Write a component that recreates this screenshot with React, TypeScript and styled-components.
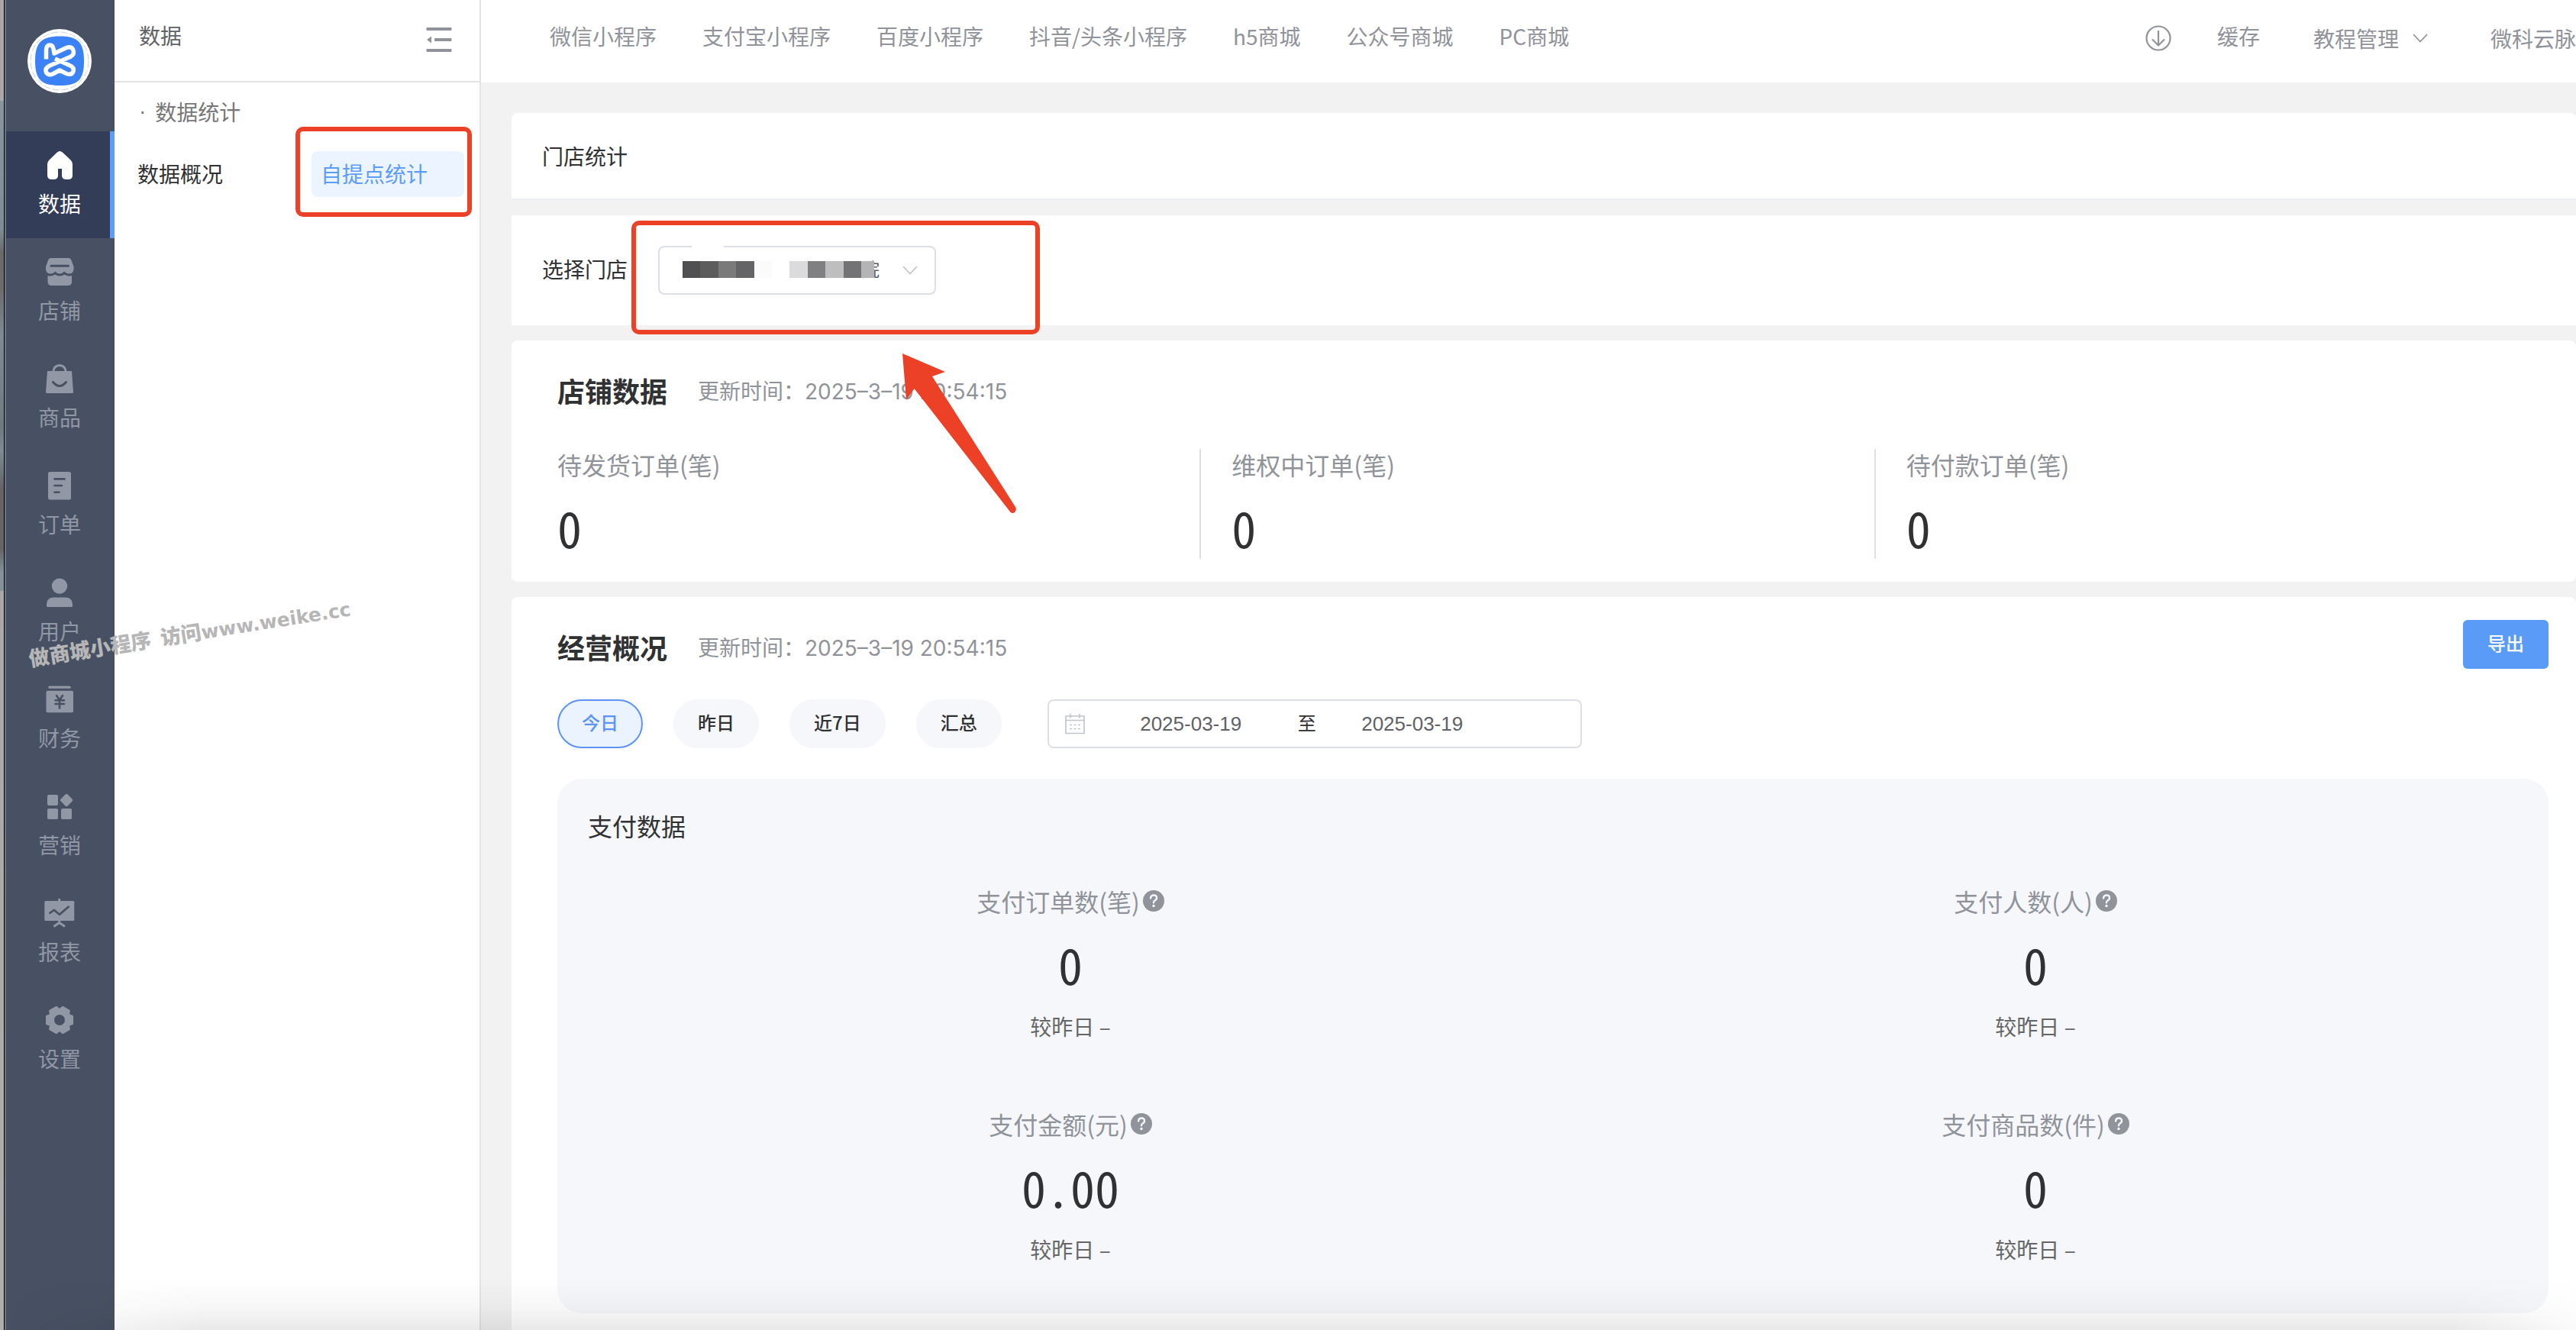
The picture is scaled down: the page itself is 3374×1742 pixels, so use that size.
import React from "react";
import styled, { createGlobalStyle } from "styled-components";

const Global = createGlobalStyle`
  *, *::before, *::after { box-sizing: border-box; }
  body {
    margin: 0;
    background: #f2f2f2;
    color: #303133;
    font-family: "Noto Sans CJK SC", sans-serif;
    font-size: 28px;
    line-height: 40px;
  }
  button, input, select { font: inherit; color: inherit; }
  a { color: inherit; text-decoration: none; }
  h1, h2, h3, p, dl, dd, dt, ul { margin: 0; padding: 0; font-weight: 400; font-size: inherit; }
  ul { list-style: none; }
`;

/* ---------- shell ---------- */

const Shell = styled.div`
  position: relative;
  display: flex;
  min-height: 100vh;
  overflow: hidden;
`;

const WindowEdge = styled.div`
  flex: none;
  width: 8px;
  background: linear-gradient(
    #a9a9a9 0 132px, #87959c 132px, #7f8d96 300px, #6a6a6a 330px, #6c6c6c 380px,
    #7d8b94 440px, #6f7a80 560px, #7d8b94 590px, #646464 640px, #666 720px,
    #83929b 750px, #83929b 774px, #a9a9a9 774px, #adb0ab 100%
  );
  border-right: 2px solid #6b7485;
  box-shadow: inset -1px 0 0 #000;
`;

const Sidebar = styled.nav`
  flex: none;
  width: 142px;
  background: #475163;
`;

const LogoLink = styled.a`
  display: flex;
  justify-content: center;
  height: 172px;
  padding: 38px 2px 0 0;
`;

const SideItem = styled.a<{ $active?: boolean }>`
  display: flex;
  flex-direction: column;
  align-items: center;
  gap: 10px;
  height: 140px;
  padding: 24px 2px 0 0;
  color: ${(p) => (p.$active ? "#fff" : "#9197a5")};
  background: ${(p) => (p.$active ? "#333d57" : "transparent")};
  box-shadow: ${(p) => (p.$active ? "inset -6px 0 0 #5c9dfb" : "none")};
  --cut: ${(p) => (p.$active ? "#333d57" : "#475163")};
`;

const SubMenu = styled.aside`
  flex: none;
  width: 480px;
  background: #fff;
  border-right: 2px solid #e4e4e4;
`;

const SubHead = styled.div`
  display: flex;
  justify-content: space-between;
  height: 108px;
  padding: 0 36px 0 32px;
  border-bottom: 2px solid #e4e4e4;
  color: #606266;
  line-height: 92px;
`;

const FoldButton = styled.button`
  display: block;
  height: 104px;
  padding: 0;
  border: 0;
  background: none;
  svg { display: block; }
`;

const GroupTitle = styled.p`
  display: flex;
  gap: 12px;
  padding: 18px 32px 32px;
  color: #777;
`;

const Dot = styled.span`
  font-family: "Liberation Sans", Arial, sans-serif;
`;

const SubLinks = styled.div`
  display: flex;
  justify-content: space-between;
  padding: 0 20px 0 30px;
`;

const SubLink = styled.a<{ $active?: boolean }>`
  position: relative;
  height: 60px;
  line-height: 58px;
  width: ${(p) => (p.$active ? "200px" : "auto")};
  padding-left: ${(p) => (p.$active ? "12px" : "0")};
  border-radius: 8px;
  color: ${(p) => (p.$active ? "#5c9dfb" : "#303133")};
  background: ${(p) => (p.$active ? "#ecf4ff" : "none")};
`;

const RedFrame = styled.span<{ $inset: string }>`
  position: absolute;
  inset: ${(p) => p.$inset};
  border: 6px solid #ec4126;
  border-radius: 10px;
  pointer-events: none;
`;

/* ---------- top bar ---------- */

const Page = styled.div`
  flex: 1;
  min-width: 0;
  display: flex;
  flex-direction: column;
`;

const TopBar = styled.header`
  display: flex;
  justify-content: space-between;
  height: 108px;
  padding-left: 90px;
  background: #fff;
  color: #909399;
  white-space: nowrap;
`;

const TopNav = styled.nav`
  display: flex;
  gap: 60px;
  line-height: 94px;
`;

const TopTools = styled.div`
  display: flex;
  line-height: 94px;
`;

const ToolButton = styled.button<{ $gap: number; $low?: boolean }>`
  display: flex;
  align-items: center;
  gap: 18px;
  height: ${(p) => (p.$low ? "100px" : "94px")};
  margin: 0 0 0 ${(p) => p.$gap}px;
  padding: 0;
  border: 0;
  background: none;
`;

/* ---------- cards ---------- */

const Main = styled.main`
  flex: 1;
  display: flex;
  flex-direction: column;
  gap: 20px;
  padding: 40px 0 0 40px;
`;

const TitleCard = styled.section`
  padding: 0 40px;
  background: #fff;
  border-bottom: 2px solid #ebeef5;
  border-radius: 8px 8px 0 0;
  line-height: 112px;
`;

const StoreCard = styled.section`
  position: relative;
  display: flex;
  gap: 40px;
  padding: 40px;
  background: #fff;
`;

const StoreLabel = styled.label`
  line-height: 60px;
`;

const SelectBox = styled.div`
  position: relative;
  display: flex;
  width: 364px;
  height: 64px;
`;

const StoreSelect = styled.select`
  appearance: none;
  width: 100%;
  padding: 0 60px 4px 264px;
  border: 2px solid #dcdfe6;
  border-radius: 8px;
  background: #fff;
  color: #606266;
  font-size: 24px;
`;

const SelectArrow = styled.span`
  position: absolute;
  top: 26px;
  right: 24px;
  display: flex;
`;

const Mosaic = styled.span`
  position: absolute;
  top: 20px;
  left: 32px;
  display: grid;
  grid-template-columns: repeat(10, 1fr) 17px;
  width: 251px;
  height: 22px;
`;

const Tile = styled.span<{ $tone: string }>`
  background: ${(p) => p.$tone};
`;

const Smudge = styled.span`
  position: absolute;
  top: 0;
  left: 44px;
  width: 42px;
  height: 6px;
  background: #fff;
`;

const Arrow = styled.svg`
  position: absolute;
  top: 180px;
  left: 508px;
  z-index: 2;
  pointer-events: none;
`;

const DataCard = styled.section<{ $grow?: boolean }>`
  flex: ${(p) => (p.$grow ? "1" : "none")};
  padding: 30px 36px 30px 18px;
  background: #fff;
  border-radius: 8px;
`;

const CardHead = styled.div`
  display: flex;
  gap: 40px;
  height: 68px;
  padding-left: 42px;
  line-height: 70px;
`;

const CardTitle = styled.h2`
  font-size: 36px;
  font-weight: 700;
`;

const Updated = styled.span`
  color: #909399;
`;

const UpdatedTime = styled.time`
  font-family: Inter, "Noto Sans CJK SC", sans-serif;
`;

const ExportButton = styled.button`
  width: 112px;
  height: 64px;
  margin-left: auto;
  padding: 0 0 4px;
  border: 0;
  border-radius: 6px;
  background: #5b9bf8;
  color: #fff;
  font-size: 24px;
  font-weight: 500;
  line-height: 60px;
`;

const Stats = styled.dl`
  display: grid;
  grid-template-columns: repeat(3, 1fr);
  margin-top: 44px;
`;

const Stat = styled.div`
  height: 144px;
  padding-left: 40px;
  border-left: 2px solid #dcdfe6;
  &:first-child { border-color: transparent; }
`;

const StatName = styled.dt`
  color: #909399;
  font-size: 32px;
`;

const Figure = styled.dd`
  margin: 0;
  font-family: "Noto Sans Mono CJK SC", "Noto Sans CJK SC", sans-serif;
  font-size: 64px;
  line-height: 76px;
`;

const StatFigure = styled(Figure)`
  margin-top: 24px;
`;

const Filters = styled.div`
  display: flex;
  gap: 40px;
  padding: 36px 0 40px 42px;
`;

const Pill = styled.button<{ $active?: boolean }>`
  height: 64px;
  padding: 0 30px 4px;
  border: 2px solid ${(p) => (p.$active ? "#5c93f6" : "#f5f7fb")};
  border-radius: 32px;
  background: ${(p) => (p.$active ? "#ebf3fe" : "#f5f7fb")};
  color: ${(p) => (p.$active ? "#5c93f6" : "#303133")};
  font-size: 24px;
  font-weight: 500;
`;

const DateRange = styled.div`
  display: flex;
  align-items: center;
  width: 700px;
  height: 64px;
  margin-left: 20px;
  padding-left: 20px;
  border: 2px solid #dcdfe6;
  border-radius: 8px;
  font-size: 24px;
`;

const DateInput = styled.input`
  width: 252px;
  padding: 0;
  border: 0;
  outline: 0;
  background: none;
  color: #606266;
  font-family: "Liberation Sans", Arial, sans-serif;
  font-size: 26px;
  text-align: center;
`;

const CalendarSlot = styled.span`
  display: flex;
  width: 40px;
`;

const Until = styled.span`
  width: 38px;
  padding-bottom: 4px;
  text-align: right;
`;

const Panel = styled.section`
  margin-left: 42px;
  padding: 36px 40px 64px;
  border-radius: 32px;
  background: #f5f7fb;
`;

const PanelTitle = styled.h3`
  font-size: 32px;
  line-height: 50px;
`;

const Metrics = styled.dl`
  display: grid;
  grid-template-columns: 1fr 1fr;
  gap: 84px 0;
  margin-top: 50px;
  text-align: center;
`;

const MetricName = styled.dt`
  display: flex;
  align-items: center;
  justify-content: center;
  gap: 4px;
  color: #909399;
  font-size: 32px;
  line-height: 48px;
`;

const MetricFigure = styled(Figure)`
  padding: 20px 0 24px;
`;

const Compare = styled.dd`
  margin: 0;
  color: #666;
`;

/* ---------- overlays ---------- */

const Watermark = styled.div`
  position: absolute;
  top: 846px;
  left: 38px;
  transform: rotate(-9deg);
  transform-origin: 0 50%;
  color: #b6b6b6;
  font-size: 27px;
  font-weight: 900;
  line-height: 32px;
  white-space: pre;
  pointer-events: none;
`;

const WatermarkSite = styled.span`
  font-family: "DejaVu Sans", sans-serif;
  font-size: 25px;
  font-weight: 700;
`;

const BottomShade = styled.div`
  position: absolute;
  right: 0;
  bottom: 0;
  left: 8px;
  height: 76px;
  background: linear-gradient(rgba(0, 0, 0, 0), rgba(0, 0, 0, 0.03) 50%, rgba(0, 0, 0, 0.1));
  mask-image: linear-gradient(90deg, transparent, #000 260px calc(100% - 160px), rgba(0, 0, 0, 0.2));
  pointer-events: none;
`;

/* ---------- icons ---------- */

const cut = "var(--cut)";

const Glyph = ({ children }: { children: React.ReactNode }) => (
  <svg width="40" height="40" viewBox="0 0 40 40" fill="currentColor" aria-hidden="true">
    {children}
  </svg>
);

const gearPoints = Array.from({ length: 6 }, (_, i) =>
  [[-30, 13.2], [-16, 17.2], [16, 17.2]].map(([offset, radius]) => {
    const a = ((i * 60 + offset) * Math.PI) / 180;
    return `${20 + radius * Math.cos(a)},${20 + radius * Math.sin(a)}`;
  })
)
  .flat()
  .join(" ");

const icons: Record<string, React.ReactNode> = {
  home: (
    <path d="M16.8 3.6Q20.3 0.6 23.8 3.6L34.5 13.4Q37 15.8 37 19V33.5Q37 39 31 39H29Q23 39 23 34V25H18V34Q18 39 12 39H10Q4 39 4 33.5V19Q4 15.8 6.5 13.4Z" />
  ),
  shop: (
    <>
      <path d="M9 2H31.5Q34.5 2 35.5 5L38.6 13.5Q39.5 22.5 32.5 22.5Q28.5 22.5 26.3 19.5Q23.8 22.5 20.3 22.5Q16.8 22.5 14.3 19.5Q12 22.5 8 22.5Q1 22.5 2 13.5L5 5Q6 2 9 2Z" />
      <path d="M4.5 25Q10 26.5 14 23.5Q20 27.5 26.5 23.5Q30.5 26.5 36 25V33Q36 38 31 38H9.5Q4.5 38 4.5 33Z" />
      <path d="M9 12.3H31.5" stroke={cut} strokeWidth="3" strokeLinecap="round" />
    </>
  ),
  bag: (
    <>
      <path d="M4 10H36L38 37.5Q38 39 36.5 39H3.5Q2 39 2 37.5Z" />
      <path d="M12 11V10A8 7.5 0 0 1 28 10V11" fill="none" stroke="currentColor" strokeWidth="3" />
      <path d="M11.5 24.5Q20 34.5 28.5 24.5" fill="none" stroke={cut} strokeWidth="3" strokeLinecap="round" />
    </>
  ),
  order: (
    <>
      <rect x="5" y="2" width="30" height="36.5" rx="2.5" />
      <path d="M13.5 11.4H26.5M13.5 20H23M13.5 28.7H19.5" stroke={cut} strokeWidth="2.6" strokeLinecap="round" />
    </>
  ),
  user: (
    <>
      <circle cx="20" cy="11.6" r="10.2" />
      <path d="M11.5 26.5H28.5Q37 27 37 36V37.5Q37 39 35.5 39H4.5Q3 39 3 37.5V36Q3 27 11.5 26.5Z" />
    </>
  ),
  finance: (
    <>
      <rect x="5.3" y="2.5" width="29.4" height="3.2" rx="1.5" />
      <rect x="2.5" y="8.8" width="35.5" height="28.5" rx="2" />
      <path d="M16 15L20 21L24 15M20 21V31.5M14.5 21.3H26M14.500 26H26" fill="none" stroke={cut} strokeWidth="2.6" strokeLinecap="round" />
    </>
  ),
  market: (
    <>
      <rect x="4" y="5" width="14" height="14" rx="2" />
      <rect x="4" y="23" width="14" height="14" rx="2" />
      <rect x="22" y="23" width="14" height="14" rx="2" />
      <rect x="22.8" y="5.7" width="12.6" height="12.6" rx="1.8" transform="rotate(45 29.1 12)" />
    </>
  ),
  report: (
    <>
      <rect x="0.3" y="4" width="39" height="26" rx="1.5" />
      <path d="M19.7 1V5M19.7 29V34M12.5 37.5L19.7 32.5L27 37.5" fill="none" stroke="currentColor" strokeWidth="3" />
      <path d="M6.5 20.5L12.7 16L20 21.8L32.5 11" fill="none" stroke={cut} strokeWidth="2.6" />
    </>
  ),
  gear: (
    <>
      <polygon points={gearPoints} stroke="currentColor" strokeWidth="3" strokeLinejoin="round" />
      <circle cx="20" cy="20" r="7" fill={cut} />
    </>
  ),
};

const Logo = () => (
  <svg width="84" height="84" viewBox="0 0 84 84" aria-label="logo">
    <circle cx="42" cy="42" r="42" fill="#fff" />
    <circle cx="42" cy="42" r="38" fill="none" stroke="#a9b0bb" strokeWidth="0.6" strokeDasharray="9 3" />
    <path d="M42 9.5C66 9.5 74 17 74 42S66 74 42 74S10 66 10 42S18 9.5 42 9.5Z" fill="#3a82f5" />
    <g fill="none" stroke="#fff" strokeWidth="5.5" strokeLinejoin="round">
      <path d="M24.5 39.5V28Q24.5 21 29.5 21Q33 21 34 26L35 32L51 24.5Q58 22 60 28Q62 33 56 36.5L29 48Q22 51.5 24.5 57Q27.5 61.5 34 58.5L42 54L51 58.5Q58 61 60 55.5Q61.5 50 55 47.5L36 39" />
    </g>
  </svg>
);

const Help = () => (
  <svg width="28" height="28" viewBox="0 0 28 28" aria-hidden="true">
    <circle cx="14" cy="14" r="14" fill="#909399" />
    <path d="M10 10.5Q10.5 6.5 14.2 6.5Q18 6.5 18 10Q18 12.3 15.8 13.3Q14 14.2 14 16.3" fill="none" stroke="#f5f7fb" strokeWidth="2.4" strokeLinecap="round" />
    <circle cx="14" cy="20.5" r="1.7" fill="#f5f7fb" />
  </svg>
);

const Chevron = ({ color }: { color: string }) => (
  <svg width="20" height="12" viewBox="0 0 20 12" fill="none" stroke={color} strokeWidth="1.8" aria-hidden="true">
    <path d="M1 1L10 10.5L19 1" />
  </svg>
);

/* ---------- data ---------- */

const sideItems = [
  ["home", "数据"],
  ["shop", "店铺"],
  ["bag", "商品"],
  ["order", "订单"],
  ["user", "用户"],
  ["finance", "财务"],
  ["market", "营销"],
  ["report", "报表"],
  ["gear", "设置"],
];

const channels = ["微信小程序", "支付宝小程序", "百度小程序", "抖音/头条小程序", "h5商城", "公众号商城", "PC商城"];
const shopStats = ["待发货订单(笔)", "维权中订单(笔)", "待付款订单(笔)"];
const periods = ["今日", "昨日", "近7日", "汇总"];
const payMetrics = [
  ["支付订单数(笔)", "0"],
  ["支付人数(人)", "0"],
  ["支付金额(元)", "0.00"],
  ["支付商品数(件)", "0"],
];
const tiles = ["#505052", "#5c5c5c", "#7a7a7a", "#646466", "#fbfbfb", "#fff", "#dbdbdd", "#808082", "#bebebe", "#737375", "#b4b4b6"];

const UpdateNote = () => (
  <Updated>
    更新时间：<UpdatedTime>2025–3–19 20:54:15</UpdatedTime>
  </Updated>
);

export default function App() {
  return (
    <>
      <Global />
      <Shell>
        <WindowEdge />
        <Sidebar>
          <LogoLink href="#">
            <Logo />
          </LogoLink>
          {sideItems.map(([icon, name], i) => (
            <SideItem href="#" key={name} $active={i === 0}>
              <Glyph>{icons[icon]}</Glyph>
              <span>{name}</span>
            </SideItem>
          ))}
        </Sidebar>

        <SubMenu>
          <SubHead>
            <span>数据</span>
            <FoldButton aria-label="收起菜单">
              <svg width="34" height="34" viewBox="0 0 34 34" fill="#909399">
                <rect x="0.5" y="1" width="33" height="4" rx="1" />
                <rect x="11" y="15" width="22.5" height="4" rx="1" />
                <rect x="0.5" y="29" width="33" height="4" rx="1" />
                <path d="M1 17L7 12.5V21.5Z" />
              </svg>
            </FoldButton>
          </SubHead>
          <GroupTitle>
            <Dot>·</Dot>
            <span>数据统计</span>
          </GroupTitle>
          <SubLinks>
            <SubLink href="#">数据概况</SubLink>
            <SubLink href="#" $active>
              自提点统计
              <RedFrame $inset="-32px -10px -26px -21px" />
            </SubLink>
          </SubLinks>
        </SubMenu>

        <Page>
          <TopBar>
            <TopNav>
              {channels.map((name) => (
                <a href="#" key={name}>{name}</a>
              ))}
            </TopNav>
            <TopTools>
              <ToolButton $gap={0} $low aria-label="下载">
                <svg width="34" height="34" viewBox="0 0 34 34" fill="none" stroke="#909399" strokeWidth="2.2">
                  <circle cx="17" cy="17" r="15.5" />
                  <path d="M17 7V26.500M9 18.500L17 26.500L25 18.500" />
                </svg>
              </ToolButton>
              <ToolButton $gap={60}>缓存</ToolButton>
              <ToolButton $gap={70} $low>
                教程管理
                <Chevron color="#909399" />
              </ToolButton>
              <ToolButton $gap={82} $low>微科云脉</ToolButton>
            </TopTools>
          </TopBar>

          <Main>
            <TitleCard>
              <h1>门店统计</h1>
            </TitleCard>

            <StoreCard>
              <StoreLabel htmlFor="store">选择门店</StoreLabel>
              <SelectBox>
                <StoreSelect id="store">
                  <option>院</option>
                </StoreSelect>
                <Smudge />
                <Mosaic>
                  {tiles.map((tone, i) => (
                    <Tile key={i} $tone={tone} />
                  ))}
                </Mosaic>
                <SelectArrow>
                  <Chevron color="#c0c4cc" />
                </SelectArrow>
                <RedFrame $inset="-33px -136px -52px -35px" />
              </SelectBox>
              <Arrow width="160" height="220" viewBox="0 0 160 220">
                <path d="M4 1L60 25L43 31L152 202Q154 206 151 209Q147 212 144 207L19.5 47L9 62Z" fill="#ec4126" />
              </Arrow>
            </StoreCard>

            <DataCard>
              <CardHead>
                <CardTitle>店铺数据</CardTitle>
                <UpdateNote />
              </CardHead>
              <Stats>
                {shopStats.map((name) => (
                  <Stat key={name}>
                    <StatName>{name}</StatName>
                    <StatFigure>0</StatFigure>
                  </Stat>
                ))}
              </Stats>
            </DataCard>

            <DataCard $grow>
              <CardHead>
                <CardTitle>经营概况</CardTitle>
                <UpdateNote />
                <ExportButton>导出</ExportButton>
              </CardHead>
              <Filters>
                {periods.map((name, i) => (
                  <Pill key={name} $active={i === 0}>{name}</Pill>
                ))}
                <DateRange>
                  <CalendarSlot>
                    <svg width="28" height="28" viewBox="0 0 28 28" fill="none" stroke="#c0c4cc" strokeWidth="1.6" aria-hidden="true">
                      <path d="M2 4H26V26.5H2ZM2 9.5H26M8 1V6.5M20 1V6.5" />
                      <path d="M7 15.5H21M7 20.5H21" strokeDasharray="3 2.5" />
                    </svg>
                  </CalendarSlot>
                  <DateInput aria-label="开始日期" defaultValue="2025-03-19" />
                  <Until>至</Until>
                  <DateInput aria-label="结束日期" defaultValue="2025-03-19" />
                </DateRange>
              </Filters>
              <Panel>
                <PanelTitle>支付数据</PanelTitle>
                <Metrics>
                  {payMetrics.map(([name, value]) => (
                    <div key={name}>
                      <MetricName>
                        {name}
                        <Help />
                      </MetricName>
                      <MetricFigure>{value}</MetricFigure>
                      <Compare>较昨日 –</Compare>
                    </div>
                  ))}
                </Metrics>
              </Panel>
            </DataCard>
          </Main>
        </Page>

        <Watermark>
          做商城小程序  访问<WatermarkSite>www.weike.cc</WatermarkSite>
        </Watermark>
        <BottomShade />
      </Shell>
    </>
  );
}
